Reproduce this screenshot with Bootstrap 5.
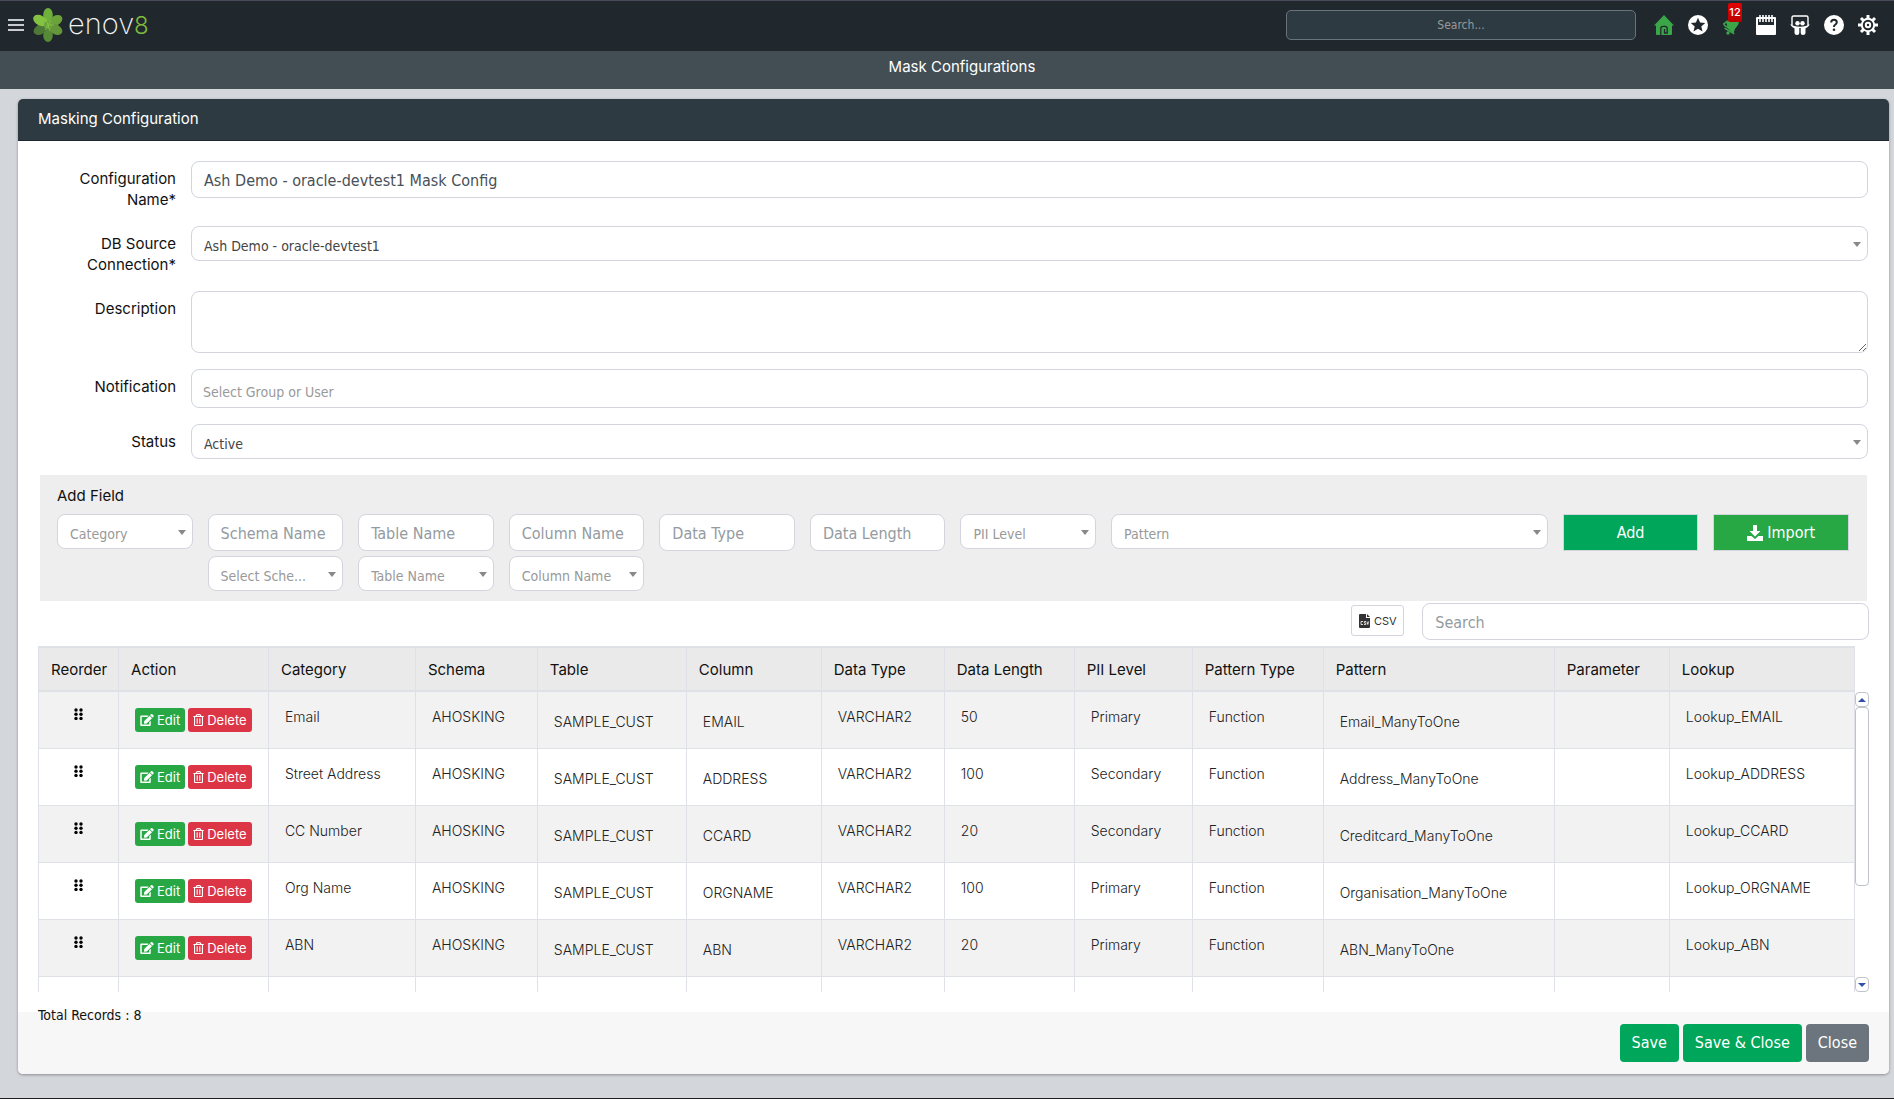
<!DOCTYPE html>
<html lang="en">
<head>
<meta charset="utf-8">
<meta name="viewport" content="width=device-width, initial-scale=1">
<title>Mask Configurations</title>
<link href="https://cdn.jsdelivr.net/npm/bootstrap@5.3.0/dist/css/bootstrap.min.css" rel="stylesheet">
<style>
:root { --ui: Inter, "Open Sans", sans-serif; --field: "DejaVu Sans Condensed", "DejaVu Sans", sans-serif; --line: #d2d5de; }
body { font: 15px/21px var(--ui); color: #111; background: #d3d6db; border-bottom: 1px solid #1b1d1e; min-height: 100vh; }
svg { display: block; }
.topbar { height: 51px; background: #20282d; border-top: 1px solid #4b4a5c; padding: 0 16px 2px 8px; }
.menu-btn { width: 16px; height: 16px; }
.brand-name { font-size: 29px; line-height: 34px; font-weight: 200; color: #f4f4f4; }
.brand-name span { font-size: 24px; font-weight: 300; color: #7dbb3c; }
.top-search { width: 350px; height: 30px; background: #2d3a41; border: 1px solid #68747a; border-radius: 5px; font: 12px/18px var(--field); text-align: center; color: #fff; margin-right: 18px; }
.top-search::placeholder { color: #999; opacity: 1; }
.top-icons { gap: 14px; }
.top-icons a { display: block; width: 20px; height: 20px; color: #fff; }
.top-icons .go { color: #3aa648; }
.count-badge { position: absolute; left: 6px; top: -12px; width: 14px; height: 19px; background: linear-gradient(#e60000, #b80000); border-radius: 2px; font-size: 11px; line-height: 19px; font-weight: 500; color: #fff; text-align: center; }
.page-title { height: 38px; background: #424e54; color: #fff; padding: 4px 0 0 30px; font-size: 15px; line-height: 24px; font-weight: 400; }
.main-card { margin: 10px 5px 23px 18px; border: 0; border-radius: 5px; box-shadow: 0 1px 3px rgba(0,0,0,.35); }
.main-card > .card-header { background: #2d3a41; border-bottom: 1px solid #20282d; color: #fff; padding: 9px 20px 11px; border-radius: 5px 5px 0 0; }
.main-card > .card-body { padding: 20px 20px 0; }
.main-card > .card-footer { background: #f7f7f7; border: 0; padding: 12px 20px; border-radius: 0 0 5px 5px; }
.form-line { display: flex; margin: 0 1px 16px 0; }
.form-line > label { flex: 0 0 138px; padding-top: 7px; text-align: right; margin-right: 15px; }
.box { width: 100%; display: block; border: 1px solid var(--line); border-radius: 8px; background-color: #fff; padding: 2px 12px 0; color: #495057; font: 16px/24px var(--field); height: 37px; }
.box::placeholder { color: #939ba1; opacity: 1; }
.box.pick { height: 35px; font-size: 14px; line-height: 20px; color: #444; padding: 4px 24px 0 12px; appearance: none; background: #fff url("data:image/svg+xml,%3Csvg xmlns='http://www.w3.org/2000/svg' width='8' height='5'%3E%3Cpath d='M0 0h8L4 5z' fill='%23888'/%3E%3C/svg%3E") no-repeat right 6px top 15px; }
.box.blank { color: #999; }
.box.area { height: 62px; }
.box.note { height: 39px; font-size: 14px; padding: 6px 11px 0; }
.box.note::placeholder { color: #999; }
.add-panel { background: #eee; margin: 0 2px; padding: 10px 18px 10px 17px; }
.add-panel .row { --bs-gutter-x: 15px; margin-top: 8px; }
.add-panel .box + .box { margin-top: 5px; }
.add-panel .btn { width: 100%; height: 37px; border: 1px solid var(--line); border-radius: 0; font: 16px/24px var(--field); color: #fff; padding: 0; display: flex; align-items: center; justify-content: center; gap: 4px; }
.bg-add, .btn.bg-add { background: #00a65a; color: #fff; }
.bg-imp { background: #28a745; }
.tools { margin: 2px 0 6px; gap: 18px; }
.tools .btn { border: 1px solid var(--line); border-radius: 3px; height: 31px; width: 53px; padding: 0; font: 11px/18px var(--ui); color: #333; display: flex; align-items: center; justify-content: center; gap: 4px; margin-top: 2px; }
.tools .finder { width: 24.4%; }
.grid-wrap { max-height: 346px; overflow: hidden; }
.grid-view { flex: 1 1 0; min-width: 0; }
.mask-table { table-layout: fixed; border-collapse: separate; border-spacing: 0; width: 100%; }
.mask-table > thead > tr > th { height: 46px; padding: 0 0 0 12px; background: #eaeaea; border: 0 solid #dee2e6; border-width: 2px 1px 2px 0; vertical-align: middle; font-size: 15px; font-weight: 400; color: #111; white-space: nowrap; }
.mask-table > tbody > tr > td { height: 57px; padding: 14px 0 0 16px; background: #fff; border: 0 solid #dee2e6; border-width: 0 1px 1px 0; vertical-align: top; font-size: 14px; font-weight: 300; color: #222; white-space: nowrap; box-shadow: none; }
.mask-table > tbody > tr:nth-child(odd) > td { background: #f2f2f2; }
.mask-table > tbody > tr > td:nth-child(5), .mask-table > tbody > tr > td:nth-child(6), .mask-table > tbody > tr > td:nth-child(11) { padding-top: 19px; }
.mask-table > tbody > tr > td:nth-child(-n+2) { padding-top: 16px; }
.mask-table > thead > tr > th:first-child, .mask-table > tbody > tr > td:first-child { border-left-width: 1px; }
.mask-table > tbody > tr > td:first-child { padding-left: 35px; }
.mask-table .btn { height: 24px; padding: 0 5px; border: 0; border-radius: 3px; font: 13px/20px var(--ui); color: #fff; display: flex; align-items: center; gap: 3px; }
.act-pair { gap: 3px; }
.bg-del { background: #dc3545; }
.scroller { width: 14px; padding-top: 46px; }
.scroller button { width: 14px; height: 15px; padding: 0; border: 1px solid #c0c3c9; border-radius: 4px; background: #fff; display: flex; align-items: center; justify-content: center; }
.scroll-thumb { height: 179px; border: 1px solid #c0c3c9; border-radius: 4px; background: #fff; }
.records { font: 14px/21px var(--field); margin: 13px 0 -14px; z-index: 1; }
.card-footer .btn { height: 38px; padding: 0 12px; border: 0; border-radius: 4px; font: 16px/24px var(--field); color: #fff; }
.btn.bg-shut { background: #6c757d; }
</style>
<script src="https://cdn.jsdelivr.net/npm/bootstrap@5.3.0/dist/js/bootstrap.bundle.min.js"></script>
</head>
<body>
<svg class="d-none" aria-hidden="true">
  <symbol id="i-grip" viewBox="0 0 9 12"><g fill="#000"><circle cx="2" cy="2" r="1.7"/><circle cx="7" cy="2" r="1.7"/><circle cx="2" cy="6.2" r="1.7"/><circle cx="7" cy="6.2" r="1.7"/><circle cx="2" cy="10.4" r="1.7"/><circle cx="7" cy="10.4" r="1.7"/></g></symbol>
  <symbol id="i-edit" viewBox="0 0 576 512"><path fill="currentColor" d="M402.600 83.200l90.200 90.200c3.800 3.800 3.800 10 0 13.800L274.400 405.600l-92.800 10.300c-12.400 1.400-22.900-9.100-21.500-21.500l10.300-92.800L388.800 83.200c3.800-3.800 10-3.800 13.800 0zm162-22.900l-48.800-48.800c-15.200-15.200-39.900-15.200-55.200 0l-35.400 35.400c-3.800 3.800-3.800 10 0 13.800l90.200 90.200c3.800 3.800 10 3.800 13.800 0l35.400-35.400c15.200-15.300 15.200-40 0-55.200zM384 346.200V448H64V128h229.800c3.200 0 6.200-1.300 8.500-3.500l40-40c7.600-7.600 2.200-20.500-8.500-20.500H48C21.500 64 0 85.500 0 112v352c0 26.500 21.500 48 48 48h352c26.500 0 48-21.500 48-48V306.200c0-10.700-12.900-16-20.500-8.500l-40 40c-2.200 2.300-3.500 5.300-3.500 8.500z"/></symbol>
  <symbol id="i-trash" viewBox="0 0 448 512"><path fill="currentColor" d="M268 416h24a12 12 0 0 0 12-12V188a12 12 0 0 0-12-12h-24a12 12 0 0 0-12 12v216a12 12 0 0 0 12 12zM432 80h-82.400l-34-56.700A48 48 0 0 0 274.400 0H173.600a48 48 0 0 0-41.200 23.300L98.400 80H16A16 16 0 0 0 0 96v16a16 16 0 0 0 16 16h16v336a48 48 0 0 0 48 48h288a48 48 0 0 0 48-48V128h16a16 16 0 0 0 16-16V96a16 16 0 0 0-16-16zM171.800 50.900a6 6 0 0 1 5.200-2.900h94a6 6 0 0 1 5.200 2.900L293.600 80H154.400zM368 464H80V128h288zm-212-48h24a12 12 0 0 0 12-12V188a12 12 0 0 0-12-12h-24a12 12 0 0 0-12 12v216a12 12 0 0 0 12 12z"/></symbol>
</svg>

<header class="topbar d-flex align-items-center">
  <button class="btn p-0 border-0 menu-btn" type="button" aria-label="Menu"><svg width="16" height="16" viewBox="0 0 16 16"><path d="M0 3h16M0 8h16M0 13h16" stroke="#c9cbd0" stroke-width="2"/></svg></button>
  <a href="#" class="d-flex align-items-center text-decoration-none ms-2 me-auto gap-1">
    <svg width="32" height="34" viewBox="0 0 32 34" aria-hidden="true">
      <g transform="translate(16 17)">
        <ellipse cx="0" cy="-10" rx="4.800" ry="7" fill="#6fb03c"/>
        <ellipse cx="0" cy="10" rx="4.800" ry="7" fill="#568a36"/>
        <ellipse cx="0" cy="-9" rx="4.800" ry="7" transform="rotate(60)" fill="#6ba33a"/>
        <ellipse cx="0" cy="-9" rx="4.800" ry="7" transform="rotate(120)" fill="#65973a"/>
        <ellipse cx="0" cy="-9" rx="4.800" ry="7" transform="rotate(240)" fill="#4e7836"/>
        <ellipse cx="0" cy="-9" rx="5" ry="7.500" transform="rotate(300)" fill="#83c341"/>
        <circle r="4" fill="#6ba33a"/>
        <path d="M0 0l-2-6M0 0l3-5M0 0l6 0M0 0l2 6M0 0l-3 5" stroke="#8cc84b" stroke-width=".7"/>
      </g>
    </svg>
    <span class="brand-name">enov<span>8</span></span>
  </a>
  <input class="top-search" type="text" placeholder="Search..." aria-label="Search site">
  <nav class="d-flex top-icons" aria-label="Shortcuts">
    <a href="#" class="go" aria-label="Home"><svg width="20" height="20" viewBox="0 0 20 20"><path fill="currentColor" d="M10 0l10 10.500h-2V19q0 1-1 1H3q-1 0-1-1v-8.500H0z"/><path d="M6.800 20v-6.500q0-2.200 2.200-2.200h2q2.200 0 2.200 2.200V18h-2.700v-4" fill="none" stroke="#20282d" stroke-width="1.300"/></svg></a>
    <a href="#" aria-label="Favourites"><svg width="20" height="20" viewBox="0 0 20 20"><circle cx="10" cy="10" r="10" fill="currentColor"/><path fill="#20282d" d="M10 2.800l2.100 4.700 5.100.5-3.900 3.400 1.200 5L10 13.800l-4.500 2.600 1.200-5L2.800 8l5.100-.5z"/></svg></a>
    <a href="#" class="go position-relative" aria-label="Notifications"><svg width="20" height="20" viewBox="0 0 20 20"><g fill="currentColor"><path d="M4 8L8 3l9 4-1 3q-3.500 3.500-4.500 8L4.500 12.500Q6 10 4 8z"/><path d="M3 12.500L12.500 18l-.5 1.500L2 13.800z"/><path d="M1 8.500L5.500 5v1.500L2.500 9.500 5 11l-.5 1.500Q1 11 1 8.500z"/><circle cx="6" cy="18" r="1.700"/></g></svg><span class="count-badge">12</span></a>
    <a href="#" aria-label="Calendar"><svg width="20" height="20" viewBox="0 0 20 20"><path fill="currentColor" d="M1 2h18q1 0 1 1v16q0 1-1 1H1q-1 0-1-1V3q0-1 1-1z"/><path fill="#20282d" d="M2 4h16v6H2z"/><path stroke="currentColor" stroke-width="1.600" d="M4 0v7M7 0v7M10 0v7M13 0v7M16 0v7"/></svg></a>
    <a href="#" aria-label="Presentations"><svg width="20" height="20" viewBox="0 0 20 20"><path d="M2 10V2.500Q2 1 3.500 1h13Q18 1 18 2.500V10" fill="none" stroke="currentColor" stroke-width="1.400"/><circle cx="7.500" cy="8.300" r="2.200" fill="currentColor"/><circle cx="12.500" cy="8.300" r="2.200" fill="currentColor"/><path fill="currentColor" d="M.5 9l3 1.800q6.500 2 13 0L19.500 9q-.5 3-4 4.200v4.800q0 2-2.600 2-2.200 0-2.200-2v-5H9.300v5q0 2-2.200 2-2.600 0-2.600-2v-4.800Q1 12 .5 9z"/></svg></a>
    <a href="#" aria-label="Help"><svg width="20" height="20" viewBox="0 0 20 20"><circle cx="10" cy="10" r="10" fill="currentColor"/><path d="M7.200 7.500Q7.200 4.800 10 4.800t2.800 2.500q0 1.500-1.500 2.300T10 12" fill="none" stroke="#20282d" stroke-width="2"/><circle cx="10" cy="14.700" r="1.300" fill="#20282d"/></svg></a>
    <a href="#" aria-label="Settings"><svg width="20" height="20" viewBox="0 0 20 20"><g fill="none" stroke="currentColor"><circle cx="10" cy="10" r="6.200" stroke-width="2"/><circle cx="10" cy="10" r="2.200" stroke-width="2"/><path stroke-width="3" d="M10 0v3.500M10 16.500V20M0 10h3.500M16.500 10H20M3 3l2.500 2.500M14.500 14.500L17 17M3 17l2.500-2.500M14.500 5.500L17 3"/></g></svg></a>
  </nav>
</header>
<h1 class="page-title text-center mb-0">Mask Configurations</h1>

<main class="card main-card">
  <div class="card-header">Masking Configuration</div>
  <div class="card-body">
    <div class="form-line"><label for="cfg">Configuration<br>Name*</label><input id="cfg" class="box" value="Ash Demo - oracle-devtest1 Mask Config"></div>
    <div class="form-line"><label for="db">DB Source<br>Connection*</label><select id="db" class="box pick"><option>Ash Demo - oracle-devtest1</option></select></div>
    <div class="form-line"><label for="desc">Description</label><textarea id="desc" class="box area"></textarea></div>
    <div class="form-line"><label for="note">Notification</label><input id="note" class="box note" placeholder="Select Group or User"></div>
    <div class="form-line"><label for="status">Status</label><select id="status" class="box pick"><option>Active</option></select></div>

    <section class="add-panel">
      <div>Add Field</div>
      <div class="row">
        <div class="col-1"><select class="box pick blank" aria-label="Category"><option>Category</option></select></div>
        <div class="col-1"><input class="box" placeholder="Schema Name" aria-label="Schema name"><select class="box pick blank" aria-label="Schema"><option>Select Sche...</option></select></div>
        <div class="col-1"><input class="box" placeholder="Table Name" aria-label="Table name"><select class="box pick blank" aria-label="Table"><option>Table Name</option></select></div>
        <div class="col-1"><input class="box" placeholder="Column Name" aria-label="Column name"><select class="box pick blank" aria-label="Column"><option>Column Name</option></select></div>
        <div class="col-1"><input class="box" placeholder="Data Type" aria-label="Data type"></div>
        <div class="col-1"><input class="box" placeholder="Data Length" aria-label="Data length"></div>
        <div class="col-1"><select class="box pick blank" aria-label="PII level"><option>PII Level</option></select></div>
        <div class="col-3"><select class="box pick blank" aria-label="Pattern"><option>Pattern</option></select></div>
        <div class="col-1"><button type="button" class="btn bg-add">Add</button></div>
        <div class="col-1"><button type="button" class="btn bg-imp"><svg width="16" height="16" viewBox="0 0 16 16"><path fill="currentColor" d="M6 0h4v6h3.500L8 11.500 2.500 6H6zM0 11h4.500L8 14l3.500-3H16v5H0z"/></svg>Import</button></div>
      </div>
    </section>

    <div class="tools d-flex justify-content-end align-items-start">
      <button type="button" class="btn"><svg width="11" height="14" viewBox="0 0 11 14"><path fill="#333" d="M1 0h6v4h4v9q0 1-1 1H1q-1 0-1-1V1q0-1 1-1zM8 0l3 3H8z"/><path d="M4 7.500H2v3h2M7 7.500H5.300v1.500H6.800v1.500H5M8 7.500l.8 3 .8-3" fill="none" stroke="#fff" stroke-width=".8"/></svg>CSV</button>
      <input class="box finder" placeholder="Search" aria-label="Search fields">
    </div>

    <div class="d-flex grid-wrap">
      <div class="grid-view">
        <table class="table mb-0 mask-table">
          <colgroup><col style="width:4.460%"><col style="width:8.250%"><col style="width:8.090%"><col style="width:6.710%"><col style="width:8.200%"><col style="width:7.430%"><col style="width:6.770%"><col style="width:7.150%"><col style="width:6.490%"><col style="width:7.210%"><col style="width:12.720%"><col style="width:6.330%"><col style="width:10.190%"></colgroup>
          <thead><tr><th>Reorder</th><th>Action</th><th>Category</th><th>Schema</th><th>Table</th><th>Column</th><th>Data Type</th><th>Data Length</th><th>PII Level</th><th>Pattern Type</th><th>Pattern</th><th>Parameter</th><th>Lookup</th></tr></thead>
          <tbody>
            <tr><td><svg width="9" height="12"><use href="#i-grip"/></svg></td><td><div class="d-flex act-pair"><button type="button" class="btn bg-imp"><svg width="14" height="12"><use href="#i-edit"/></svg>Edit</button><button type="button" class="btn bg-del"><svg width="11" height="12"><use href="#i-trash"/></svg>Delete</button></div></td><td>Email</td><td>AHOSKING</td><td>SAMPLE_CUST</td><td>EMAIL</td><td>VARCHAR2</td><td>50</td><td>Primary</td><td>Function</td><td>Email_ManyToOne</td><td></td><td>Lookup_EMAIL</td></tr>
            <tr><td><svg width="9" height="12"><use href="#i-grip"/></svg></td><td><div class="d-flex act-pair"><button type="button" class="btn bg-imp"><svg width="14" height="12"><use href="#i-edit"/></svg>Edit</button><button type="button" class="btn bg-del"><svg width="11" height="12"><use href="#i-trash"/></svg>Delete</button></div></td><td>Street Address</td><td>AHOSKING</td><td>SAMPLE_CUST</td><td>ADDRESS</td><td>VARCHAR2</td><td>100</td><td>Secondary</td><td>Function</td><td>Address_ManyToOne</td><td></td><td>Lookup_ADDRESS</td></tr>
            <tr><td><svg width="9" height="12"><use href="#i-grip"/></svg></td><td><div class="d-flex act-pair"><button type="button" class="btn bg-imp"><svg width="14" height="12"><use href="#i-edit"/></svg>Edit</button><button type="button" class="btn bg-del"><svg width="11" height="12"><use href="#i-trash"/></svg>Delete</button></div></td><td>CC Number</td><td>AHOSKING</td><td>SAMPLE_CUST</td><td>CCARD</td><td>VARCHAR2</td><td>20</td><td>Secondary</td><td>Function</td><td>Creditcard_ManyToOne</td><td></td><td>Lookup_CCARD</td></tr>
            <tr><td><svg width="9" height="12"><use href="#i-grip"/></svg></td><td><div class="d-flex act-pair"><button type="button" class="btn bg-imp"><svg width="14" height="12"><use href="#i-edit"/></svg>Edit</button><button type="button" class="btn bg-del"><svg width="11" height="12"><use href="#i-trash"/></svg>Delete</button></div></td><td>Org Name</td><td>AHOSKING</td><td>SAMPLE_CUST</td><td>ORGNAME</td><td>VARCHAR2</td><td>100</td><td>Primary</td><td>Function</td><td>Organisation_ManyToOne</td><td></td><td>Lookup_ORGNAME</td></tr>
            <tr><td><svg width="9" height="12"><use href="#i-grip"/></svg></td><td><div class="d-flex act-pair"><button type="button" class="btn bg-imp"><svg width="14" height="12"><use href="#i-edit"/></svg>Edit</button><button type="button" class="btn bg-del"><svg width="11" height="12"><use href="#i-trash"/></svg>Delete</button></div></td><td>ABN</td><td>AHOSKING</td><td>SAMPLE_CUST</td><td>ABN</td><td>VARCHAR2</td><td>20</td><td>Primary</td><td>Function</td><td>ABN_ManyToOne</td><td></td><td>Lookup_ABN</td></tr>
            <tr><td></td><td></td><td></td><td></td><td></td><td></td><td></td><td></td><td></td><td></td><td></td><td></td><td></td></tr>
          </tbody>
        </table>
      </div>
      <div class="scroller d-flex flex-column">
        <button type="button" aria-label="Scroll up"><svg width="8" height="4" viewBox="0 0 8 4"><path d="M0 4l4-4 4 4z" fill="#3450a8"/></svg></button>
        <div class="scroll-thumb"></div>
        <button type="button" class="mt-auto" aria-label="Scroll down"><svg width="8" height="4" viewBox="0 0 8 4"><path d="M0 0h8L4 4z" fill="#3450a8"/></svg></button>
      </div>
    </div>
    <p class="records position-relative">Total Records : 8</p>
  </div>
  <div class="card-footer d-flex justify-content-end gap-1">
    <button type="button" class="btn bg-add">Save</button>
    <button type="button" class="btn bg-add">Save &amp; Close</button>
    <button type="button" class="btn bg-shut">Close</button>
  </div>
</main>
</body>
</html>
